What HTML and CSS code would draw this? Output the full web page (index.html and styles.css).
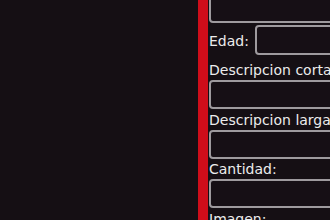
FILE: index.html
```html
<!DOCTYPE html>
<html lang="es">
<head>
<meta charset="utf-8">
<title>Formulario</title>
<link rel="stylesheet" href="styles.css">
</head>
<body>
<div class="page">
  <div class="backdrop"></div>
  <div class="panel">
    <form class="form">
      <input class="input input-top" type="text">
      <div class="row">
        <label class="label" for="edad">Edad:</label>
        <input class="input" id="edad" type="text">
      </div>
      <div class="field">
        <label class="label" for="dc">Descripcion corta:</label>
        <input class="input" id="dc" type="text">
      </div>
      <div class="field">
        <label class="label" for="dl">Descripcion larga:</label>
        <input class="input" id="dl" type="text">
      </div>
      <div class="field">
        <label class="label" for="cant">Cantidad:</label>
        <input class="input" id="cant" type="text">
      </div>
      <div class="field">
        <label class="label" for="img">Imagen:</label>
      </div>
    </form>
  </div>
</div>
</body>
</html>
```

FILE: styles.css
```css
html, body {
  margin: 0;
  padding: 0;
  background: #150f14;
}

.page {
  display: flex;
  width: 330px;
  height: 220px;
  overflow: hidden;
  font-family: "DejaVu Sans", Verdana, sans-serif;
}

.backdrop {
  flex: none;
  width: 198px;
}

.panel {
  flex: 1;
  min-width: 0;
  border-left: 10px solid #cf0d1a;
  padding-left: 1px;
  overflow: hidden;
  background: #150f14;
}

.form {
  display: flex;
  flex-direction: column;
  margin: -7px 0 0 0;
}

.input {
  box-sizing: border-box;
  flex: none;
  display: block;
  width: 260px;
  height: 30px;
  margin: 0;
  padding: 0 4px;
  border: 2px solid #9e9a9e;
  border-radius: 4px;
  background: #160f15;
  color: #eee;
  outline: none;
}

.input-top {
  margin-bottom: 2px;
}

.row {
  display: flex;
  align-items: center;
  gap: 6px;
  margin-bottom: 7px;
}

.row .input {
  width: 200px;
}

.label {
  display: block;
  flex: none;
  font-size: 14px;
  line-height: 16px;
  color: #ececec;
  white-space: nowrap;
}

.row .label {
  margin-top: 2px;
}

.field .input {
  height: 29px;
  margin-top: 2px;
  margin-bottom: 2.5px;
}
```
